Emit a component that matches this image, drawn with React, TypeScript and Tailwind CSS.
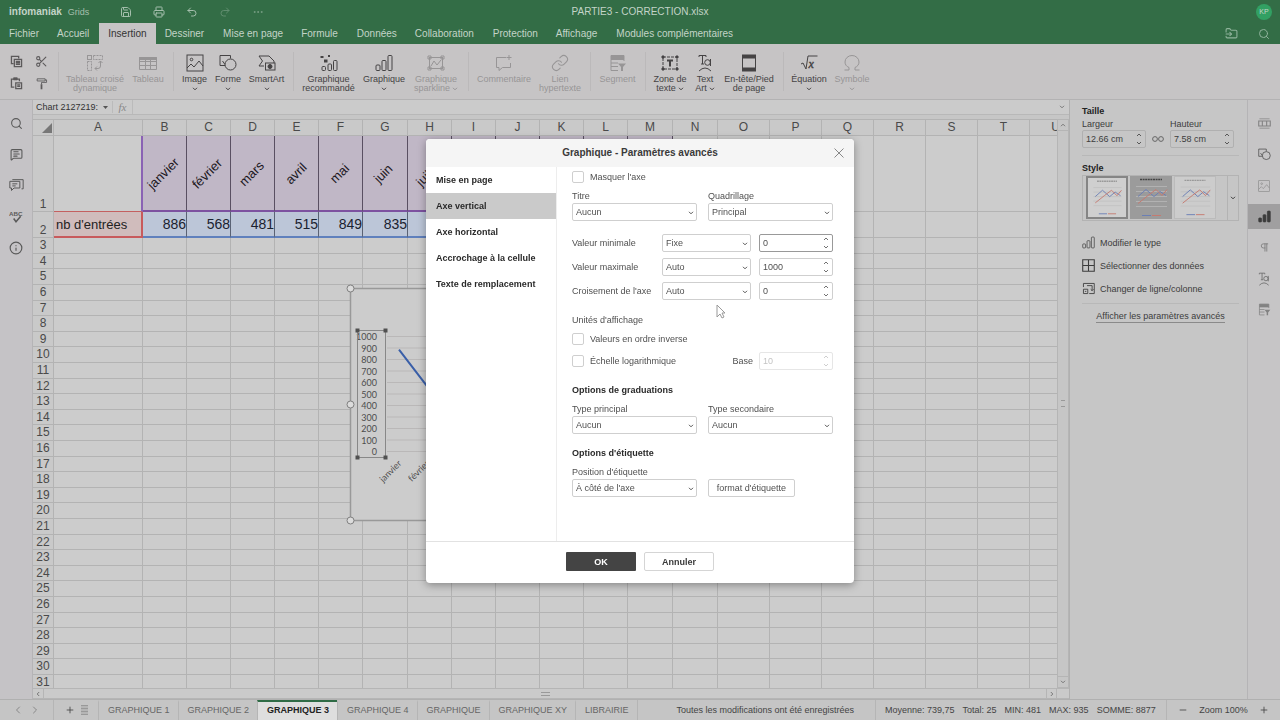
import React from "react";
import {
  Search,
  Save,
  Printer,
  Undo2,
  Redo2,
  Ellipsis,
  FolderInput,
  Scissors,
  Link,
  Info,
  MessageSquareText,
  ChevronLeft,
  ChevronRight,
  Plus,
  Minus,
  Pilcrow,
} from "lucide-react";

const menuTabs = [
  "Fichier",
  "Accueil",
  "Insertion",
  "Dessiner",
  "Mise en page",
  "Formule",
  "Données",
  "Collaboration",
  "Protection",
  "Affichage",
  "Modules complémentaires",
];

/* ---------- icons ---------- */

const Svg = ({ children, className = "w-[18px] h-[18px]", box = "0 0 18 18" }: { children: React.ReactNode; className?: string; box?: string }) => (
  <svg viewBox={box} className={className} fill="none" stroke="currentColor" strokeWidth="1" aria-hidden="true">
    {children}
  </svg>
);

const CopyIcon = () => (
  <Svg className="w-[13px] h-[13px]">
    <path d="M5 12H2V2h10v3" strokeWidth="1.800" />
    <path d="M6 6h10v10H6zM8 9h6M8 11h6M8 13h6" strokeWidth="1.800" />
  </Svg>
);
const PasteIcon = () => (
  <Svg className="w-[13px] h-[13px]">
    <path d="M6 14H2V3h11v3" strokeWidth="1.800" />
    <path d="M5 1h5v3H5z" fill="currentColor" />
    <path d="M8 8h8v8H8zM10 11h4M10 13h4" strokeWidth="1.800" />
  </Svg>
);
const BrushIcon = () => (
  <Svg className="w-[13px] h-[13px]">
    <path d="M3 2.500h11v3H3zM14 4h2v3.500H9V10" strokeWidth="1.200" />
    <path d="M9 10v7" strokeWidth="2.400" />
  </Svg>
);
const PivotIcon = () => (
  <Svg>
    <rect x="1.5" y="1.5" width="4" height="4" />
    <rect x="7.5" y="1.5" width="9" height="4" strokeDasharray="2 1" />
    <rect x="1.5" y="7.5" width="4" height="9" strokeDasharray="2 1" />
    <path d="M14.500 7v5q0 2.500-2.500 2.500H9M12.500 9l2-2 2 2M11 12.500l-2 2 2 2" />
  </Svg>
);
const TableIcon = () => (
  <Svg>
    <path d="M.5 3.500h17v12H.5zM.5 7.500h17M.5 11.500h17M6.500 3.500v12M11.500 3.500v12" />
    <path d="M.5 3.500h17v2H.5z" fill="currentColor" />
  </Svg>
);
const ImageIcon = ({ className }: { className?: string }) => (
  <Svg className={className}>
    <rect x="1" y="1" width="16" height="16" />
    <circle cx="5.500" cy="5.500" r="1.300" />
    <path d="M1 14l4-4 3 3 5-6 4 5" />
  </Svg>
);
const ShapesIcon = ({ className }: { className?: string }) => (
  <Svg className={className}>
    <path d="M6 11.500H1v-10h10.500v3" />
    <circle cx="11.500" cy="10.500" r="5.500" />
    <path d="M6 10.500L3.500 7" />
  </Svg>
);
const SmartArtIcon = () => (
  <Svg>
    <path d="M1 2h10l5 5M1 2l3.500 5L1 12h5M16 7v2" />
    <rect x="7.500" y="9" width="9.500" height="7" />
    <circle cx="12" cy="12.500" r="2" fill="currentColor" />
  </Svg>
);
const RecoIcon = () => (
  <Svg>
    <rect x="2" y="12.500" width="3.500" height="4" rx="1" />
    <rect x="8" y="10" width="3.500" height="6.500" rx="1" />
    <rect x="13.500" y="6.500" width="3.500" height="10" rx="1" />
    <path d="M.5 2h3v2h-3zM4 5.500h3.500v3H4zM8 1h2v2H8z" fill="currentColor" stroke="none" />
  </Svg>
);
const BarsIcon = ({ className, fill = "none" }: { className?: string; fill?: string }) => (
  <Svg className={className}>
    <rect x="1" y="11" width="4" height="5.500" rx="1" fill={fill} />
    <rect x="7" y="6.500" width="4" height="10" rx="1" fill={fill} />
    <rect x="13" y="1.500" width="4" height="15" rx="1" fill={fill} />
  </Svg>
);
const SparkIcon = () => (
  <Svg>
    <rect x="2.500" y="3.500" width="13" height="11" />
    <path d="M1 2h3v3H1zM14 2h3v3h-3zM1 13h3v3H1zM14 13h3v3h-3zM4 12l3-5 3 4 4-5" />
  </Svg>
);
const CommentIcon = () => (
  <Svg>
    <path d="M11 3.500H1.500v10H4v3l3.500-3h8V9M14 1v5M11.500 3.500h5" />
  </Svg>
);
const ChatsIcon = () => (
  <Svg className="w-[15px] h-[15px]">
    <path d="M1 4h12v8H6l-3 3v-3H1zM4 2h13v11h-2M4 7h6M4 9.500h4" strokeWidth="1.200" />
  </Svg>
);
const SlicerIcon = ({ className }: { className?: string }) => (
  <Svg className={className}>
    <path d="M2 1.500h13v4H2z" fill="currentColor" />
    <path d="M15 7V5.500M2 5.500v11h7M2 9h7M2 12.500h7" />
    <path d="M9 9.500h8l-3 3.500v4h-2v-4z" fill="currentColor" stroke="none" />
  </Svg>
);
const CellIcon = () => (
  <Svg className="w-[13px] h-[13px] opacity-70">
    <path d="M2 2.500h14M2 15.500h14" />
    <path d="M1 5.500h16v7H1zM6 5.500v7M12 5.500v7" strokeWidth="1.500" />
  </Svg>
);
const TextBoxIcon = () => (
  <Svg>
    <rect x="2" y="3" width="14" height="12" strokeDasharray="3 1" />
    <path d="M1 2h2v2H1zM15 2h2v2h-2zM1 14h2v2H1zM15 14h2v2h-2z" fill="currentColor" />
    <path d="M6 6.500h6M9 6.500v6" strokeWidth="2" />
  </Svg>
);
const TextArtIcon = ({ className }: { className?: string }) => (
  <Svg className={className}>
    <path d="M3 3V1.500h7V3M6.500 1.500V10M5 10h3" />
    <circle cx="11.500" cy="8.500" r="2.800" />
    <path d="M14.500 5v7M3 17q6-6 12 0" />
  </Svg>
);
const HeaderFooterIcon = () => (
  <Svg>
    <rect x="2.500" y="1" width="13" height="16" />
    <path d="M2 1h14v3.500H2zM2 13.500h14V17H2z" fill="currentColor" stroke="none" />
  </Svg>
);
const EquationIcon = () => (
  <Svg>
    <path d="M1 10l2-1 3 6 2-13h9.500" />
    <text x="8.500" y="14" fontSize="12" fontStyle="italic" fontFamily="Liberation Serif, serif" fill="currentColor" strokeWidth=".4">x</text>
  </Svg>
);
const OmegaIcon = () => (
  <Svg>
    <path d="M1.500 16H6v-2.500C3.500 12.500 2 10.500 2 8a7 6.500 0 0 1 14 0c0 2.500-1.500 4.500-4 5.500V16h4.500" />
  </Svg>
);
const SpellIcon = () => (
  <Svg className="w-[14px] h-[14px]">
    <text x="0" y="8" fontSize="8" fontWeight="bold" fontFamily="Liberation Sans, sans-serif" fill="currentColor" stroke="none">ABC</text>
    <path d="M6 11l3 4 6-7" strokeWidth="2" />
  </Svg>
);

const Caret = ({ className = "" }: { className?: string }) => (
  <Svg box="0 0 6 4" className={`w-[6px] h-[4px] ${className}`}>
    <path d="M1 .8l2 2 2-2" />
  </Svg>
);

/* ---------- ribbon ---------- */

type Tool = { lines: string[]; icon: React.ReactNode; width: string; off?: boolean; caret?: "below" | "inline" };

const groups: { pad: string; tools: Tool[] }[] = [
  {
    pad: "pr-[9px]",
    tools: [
      { lines: ["Tableau croisé", "dynamique"], icon: <PivotIcon />, width: "w-[74px]", off: true },
      { lines: ["Tableau"], icon: <TableIcon />, width: "w-[32px]", off: true },
    ],
  },
  {
    pad: "px-[5px]",
    tools: [
      { lines: ["Image"], icon: <ImageIcon />, width: "w-[33px]", caret: "below" },
      { lines: ["Forme"], icon: <ShapesIcon />, width: "w-[34px]", caret: "below" },
      { lines: ["SmartArt"], icon: <SmartArtIcon />, width: "w-[43px]", caret: "below" },
    ],
  },
  {
    pad: "px-[6px]",
    tools: [
      { lines: ["Graphique", "recommandé"], icon: <RecoIcon />, width: "w-[59px]" },
      { lines: ["Graphique"], icon: <BarsIcon />, width: "w-[52px]", caret: "below" },
      { lines: ["Graphique", "sparkline"], icon: <SparkIcon />, width: "w-[52px]", off: true, caret: "inline" },
    ],
  },
  {
    pad: "px-[5px]",
    tools: [
      { lines: ["Commentaire"], icon: <CommentIcon />, width: "w-[62px]", off: true },
      { lines: ["Lien", "hypertexte"], icon: <Link className="w-[18px] h-[18px]" strokeWidth={1.4} />, width: "w-[50px]", off: true },
    ],
  },
  { pad: "", tools: [{ lines: ["Segment"], icon: <SlicerIcon />, width: "w-[55px]", off: true }] },
  {
    pad: "px-[5px]",
    tools: [
      { lines: ["Zone de", "texte"], icon: <TextBoxIcon />, width: "w-[40px]", caret: "inline" },
      { lines: ["Text", "Art"], icon: <TextArtIcon />, width: "w-[30px]", caret: "inline" },
      { lines: ["En-tête/Pied", "de page"], icon: <HeaderFooterIcon />, width: "w-[58px]" },
    ],
  },
  {
    pad: "px-[5px]",
    tools: [
      { lines: ["Équation"], icon: <EquationIcon />, width: "w-[42px]", caret: "below" },
      { lines: ["Symbole"], icon: <OmegaIcon />, width: "w-[44px]", off: true, caret: "below" },
    ],
  },
];

const ToolButton = ({ tool }: { tool: Tool }) => (
  <button
    disabled={tool.off}
    className={`flex flex-col items-center shrink-0 whitespace-nowrap leading-[9px] ${tool.width} ${tool.off ? "text-[#979596]" : "text-[#454344]"}`}
  >
    {tool.icon}
    <span className="pt-[3px]">{tool.lines[0]}</span>
    {tool.lines[1] && (
      <span className="flex items-center gap-[2px]">
        {tool.lines[1]}
        {tool.caret === "inline" && <Caret />}
      </span>
    )}
    {tool.caret === "below" && <Caret className="mt-[3px]" />}
  </button>
);

const Ribbon = () => (
  <div className="flex h-14 shrink-0 bg-[#c6c4c5] border-b border-[#b3b2b3] overflow-hidden">
    <div className="grid grid-cols-2 w-[58px] shrink-0 px-[4px] pt-[6px] pb-[4px] place-items-center text-[#5c5a5b]">
      <button aria-label="Copier"><CopyIcon /></button>
      <button aria-label="Couper"><Scissors className="w-[13px] h-[13px]" strokeWidth={2} /></button>
      <button aria-label="Coller"><PasteIcon /></button>
      <button aria-label="Style"><BrushIcon /></button>
    </div>
    {groups.map((g, i) => (
      <div key={i} className={`flex shrink-0 items-start pt-[10px] relative ${g.pad}`}>
        <span className="absolute left-0 top-2 bottom-2 w-px bg-[#bbb9ba]" />
        {g.tools.map((t) => (
          <ToolButton key={t.lines.join(" ")} tool={t} />
        ))}
      </div>
    ))}
  </div>
);

/* ---------- sheet ---------- */

const columns = [
  { name: "A", width: "w-[89px]" },
  { name: "B", width: "w-[44px]" },
  { name: "C", width: "w-[44px]" },
  { name: "D", width: "w-[44px]" },
  { name: "E", width: "w-[44px]" },
  { name: "F", width: "w-[44px]" },
  { name: "G", width: "w-[45px]" },
  { name: "H", width: "w-[44px]" },
  { name: "I", width: "w-[44px]" },
  { name: "J", width: "w-[44px]" },
  { name: "K", width: "w-[44px]" },
  { name: "L", width: "w-[44px]" },
  { name: "M", width: "w-[45px]" },
  { name: "N", width: "w-[45px]" },
  { name: "O", width: "w-[52px]" },
  { name: "P", width: "w-[52px]" },
  { name: "Q", width: "w-[52px]" },
  { name: "R", width: "w-[52px]" },
  { name: "S", width: "w-[52px]" },
  { name: "T", width: "w-[52px]" },
  { name: "U", width: "w-[52px]" },
];

// twelve month columns, B to M
const months = ["janvier", "février", "mars", "avril", "mai", "juin", "juillet", "", "", "", "", ""];
const entries = ["886", "568", "481", "515", "849", "835", "", "", "", "", "", ""];
const emptyCols = columns.slice(13);

const lineCell = "border-r border-b border-[#b3b3b3] p-0";
const headCell = "border-r border-b border-[#b3b3b3] p-0 bg-[#c9c9c9] font-normal text-[#4a4a4a]";

const SheetTable = () => (
  <table className="table-fixed w-px border-separate border-spacing-0 text-[12px] leading-[13px]">
    <colgroup>
      <col className="w-[21px]" />
      {columns.map((c) => (
        <col key={c.name} className={c.width} />
      ))}
    </colgroup>
    <thead>
      <tr className="h-4">
        <th className={headCell}>
          <Svg box="0 0 10 10" className="w-[10px] h-[10px] ml-auto mr-[1px]">
            <path d="M10 0v10H0z" fill="#777" stroke="none" />
          </Svg>
        </th>
        {columns.map((c) => (
          <th key={c.name} className={headCell}>{c.name}</th>
        ))}
      </tr>
    </thead>
    <tbody>
      <tr className="h-[76px]">
        <th className={`${headCell} align-bottom`}>1</th>
        <td className="p-0 border-r-2 border-b border-r-[#8a62b4] border-b-[#c46060]" />
        {months.map((m, i) => (
          <td key={i} className="p-0 bg-[#c0b7c6] border-r border-b-2 border-r-[#5a5062] border-b-[#7d52a0]">
            <div className="flex justify-center items-center w-[41px] h-[70px] text-[13px] text-[#1c1822]">
              <span className="-rotate-45 whitespace-nowrap">{m}</span>
            </div>
          </td>
        ))}
        {emptyCols.map((c) => (
          <td key={c.name} className={lineCell} />
        ))}
      </tr>
      <tr className="h-[26px]">
        <th className={`${headCell} align-bottom`}>2</th>
        <td className="p-0 pl-[2px] bg-[#d0bcbc] border-r-2 border-b-2 border-[#c85a5c] text-[13px] text-[#222] whitespace-nowrap">nb d'entrées</td>
        {entries.map((n, i) => (
          <td key={i} className="p-0 bg-[#bcc6d8] border-r border-b-2 border-r-[#5a6274] border-b-[#5f80bd] text-[14px] text-[#1b2230] text-right">{n}</td>
        ))}
        {emptyCols.map((c) => (
          <td key={c.name} className={lineCell} />
        ))}
      </tr>
      {Array.from({ length: 29 }, (_, i) => (
        <tr key={i} className={i % 5 === 1 || i % 5 === 4 ? "h-[15px]" : "h-4"}>
          <th className={headCell}>{i + 3}</th>
          {columns.map((c) => (
            <td key={c.name} className={lineCell} />
          ))}
        </tr>
      ))}
    </tbody>
  </table>
);

const ticks = [1000, 900, 800, 700, 600, 500, 400, 300, 200, 100, 0];

const Chart = () => (
  <svg className="absolute left-[312px] top-[163px] w-[400px] h-[244px]" viewBox="0 0 400 244" fontFamily="Lato, sans-serif">
    <rect x="5.500" y="5.500" width="388" height="232" fill="#cccccc" stroke="#999" strokeWidth="1.500" />
    {ticks.map((t, i) => (
      <g key={t}>
        <path d={`M42 ${53.5 + i * 11.5}H380`} stroke="#bab8b8" />
        <text x="32" y={57 + i * 11.5} fontSize="9" textAnchor="end" fill="#4c4c4c">{t}</text>
      </g>
    ))}
    <polyline
      points={entries.slice(0, 6).map((n, i) => `${54 + i * 28},${168.5 - Number(n) * 0.115}`).join(" ")}
      fill="none"
      stroke="#3a5fa8"
      strokeWidth="2"
    />
    <rect x="12.500" y="47.500" width="28" height="127" fill="none" stroke="#888" />
    {[[12.5, 47.5], [40.5, 47.5], [12.5, 174.5], [40.5, 174.5]].map(([x, y]) => (
      <rect key={`${x}-${y}`} x={x - 2} y={y - 2} width="4" height="4" fill="#505050" />
    ))}
    {months.slice(0, 2).map((m, i) => (
      <text key={m} x={57 + i * 28} y="181" fontSize="9" textAnchor="end" fill="#4c4c4c" transform={`rotate(-45 ${57 + i * 28} 181)`}>{m}</text>
    ))}
    {[5.5, 121.5, 237.5].map((y) => (
      <g key={y} fill="#dcdcdc" stroke="#808080">
        <circle cx="5.500" cy={y} r="3.500" />
        <circle cx="393.500" cy={y} r="3.500" />
      </g>
    ))}
  </svg>
);

const Sheet = () => (
  <div className="flex flex-col flex-1 min-w-0 bg-[#c6c6c6]">
    <div className="flex items-center h-[15px] shrink-0 bg-[#cbcbcb] border-b border-[#b8b8b8]">
      <input aria-label="Zone de nom" defaultValue="Chart 2127219:" className="w-[66px] pl-[3px] text-[#333]" />
      <svg viewBox="0 0 5 3" className="w-[5px] h-[3px] ml-1" aria-hidden="true"><path d="M0 0h5L2.500 3z" fill="#555" /></svg>
      <i className="w-5 ml-1 text-center font-['Liberation_Serif',serif] text-[11px] text-[#888] border-l border-[#bbb]">fx</i>
      <input aria-label="Barre de formule" className="flex-1 h-full border-l border-[#bbb]" />
      <Caret className="mr-1 text-[#777]" />
    </div>
    <div className="flex flex-1 min-h-0 mt-1">
      <div className="relative flex-1 min-w-0 overflow-hidden bg-[#cccccc] border-t border-[#b3b3b3]">
        <SheetTable />
        <Chart />
      </div>
      <div className="w-3 shrink-0 flex flex-col justify-between items-center bg-[#c6c6c6] border-x border-[#b5b5b5] text-[#777]">
        <span className="w-full h-3 flex items-center justify-center border-y border-[#b5b5b5]"><Caret className="rotate-180" /></span>
        <span className="w-[4px] h-[7px] border-y border-[#999]" />
        <span className="w-full h-3 flex items-center justify-center border-y border-[#b5b5b5]"><Caret /></span>
      </div>
    </div>
    <div className="h-[11px] shrink-0 flex items-center justify-between bg-[#cacaca] border-y border-[#b5b5b5] text-[#777] pr-3">
      <span className="w-[11px] h-full flex items-center justify-center border-r border-[#b5b5b5]"><Caret className="rotate-90" /></span>
      <span className="w-[9px] h-[4px] border-y border-[#999]" />
      <span className="w-[11px] h-full flex items-center justify-center border-x border-[#b5b5b5]"><Caret className="-rotate-90" /></span>
    </div>
  </div>
);

/* ---------- side bars ---------- */

const LeftRail = () => (
  <nav className="w-[33px] shrink-0 flex flex-col items-center bg-[#c5c3c6] border-r border-[#b5b4b6] pt-2 text-[#5a5a5a]">
    {[
      { label: "Rechercher", icon: <Search className="w-[13px] h-[13px]" /> },
      { label: "Commentaires", icon: <MessageSquareText className="w-[13px] h-[13px]" /> },
      { label: "Chat", icon: <ChatsIcon /> },
      { label: "Orthographe", icon: <SpellIcon /> },
      { label: "À propos", icon: <Info className="w-[14px] h-[14px]" /> },
    ].map((item) => (
      <button key={item.label} aria-label={item.label} className="h-[31px] w-full flex items-center justify-center">{item.icon}</button>
    ))}
  </nav>
);

const RightRail = () => (
  <nav className="w-[33px] shrink-0 flex flex-col items-center bg-[#c6c5c6] border-l border-[#b5b4b6] pt-2 text-[#666]">
    {[
      { label: "Cellule", icon: <CellIcon /> },
      { label: "Forme", icon: <ShapesIcon className="w-[13px] h-[13px] text-[#444]" /> },
      { label: "Image", icon: <ImageIcon className="w-[12px] h-[12px] opacity-60" /> },
      { label: "Graphique", icon: <BarsIcon className="w-[13px] h-[13px] text-[#3c3c3c]" fill="currentColor" />, on: true },
      { label: "Paragraphe", icon: <Pilcrow className="w-[11px] h-[11px] opacity-70" /> },
      { label: "Text Art", icon: <TextArtIcon className="w-[14px] h-[14px]" /> },
      { label: "Segment", icon: <SlicerIcon className="w-[13px] h-[13px] opacity-70" /> },
    ].map((item) => (
      <button key={item.label} aria-label={item.label} className={`h-[31px] w-full flex items-center justify-center ${item.on ? "bg-[#a09fa0] bg-clip-content py-[3px]" : ""}`}>{item.icon}</button>
    ))}
  </nav>
);

const Spinner = () => (
  <svg viewBox="0 0 6 12" className="absolute right-1 top-[3px] w-[6px] h-[12px] opacity-80" fill="none" stroke="currentColor" aria-hidden="true">
    <path d="M1 3l2-2 2 2M1 9l2 2 2-2" />
  </svg>
);

const SizeField = ({ label, value }: { label: string; value: string }) => (
  <label className="block w-[64px]">
    <span className="block leading-[12px]">{label}</span>
    <span className="relative block">
      <input defaultValue={value} className="w-full h-[18px] border border-[#b0b0b0] rounded-[2px] pl-[3px]" />
      <Spinner />
    </span>
  </label>
);

const thumbs = [
  { box: "w-[42px] border-2 border-[#858585] bg-[#cfcfcf]", title: "#999" },
  { box: "w-[42px] bg-[#9b9b9b]", title: "#444" },
  { box: "w-[42px] border border-[#bbb] bg-[#cccccc]", title: "#999" },
];

const RightPanel = () => (
  <aside className="w-[178px] shrink-0 bg-[#c6c6c6] border-l border-[#b0b0b0] pl-3 pr-2 pt-[5px] text-[#3c3c3c]">
    <h3 className="font-bold leading-[12px] text-[#222]">Taille</h3>
    <div className="flex items-end gap-[6px] pt-px">
      <SizeField label="Largeur" value="12.66 cm" />
      <svg viewBox="0 0 12 6" className="w-[12px] h-[6px] mb-[6px]" fill="none" stroke="#666" aria-hidden="true">
        <circle cx="3" cy="3" r="2.400" />
        <circle cx="9" cy="3" r="2.400" />
      </svg>
      <SizeField label="Hauteur" value="7.58 cm" />
    </div>
    <hr className="mt-[7px] border-[#b8b8b8]" />
    <h3 className="font-bold leading-[12px] mt-[6px] text-[#222]">Style</h3>
    <div className="flex h-[46px] mt-px w-full border border-[#b3b3b3] items-start pl-[3px] gap-[2px]">
      {thumbs.map((t, i) => (
        <svg key={i} viewBox="0 0 42 42" className={`h-[43px] shrink-0 ${t.box}`} fill="none" aria-hidden="true">
          <path d="M10 3h22" stroke={t.title} strokeWidth="1.500" strokeDasharray="2 .6" />
          <path d="M6 10h31M6 15h31M6 20h31M6 25h31M6 30h31" stroke="#bcbcbc" strokeWidth=".7" />
          <path d="M8 20l8-7 8 7 6-5 6 4" stroke="#6b7fb5" />
          <path d="M8 27l10-8 8-6 6 6 5-6" stroke="#c57a70" />
          <path d="M12 39h9" stroke="#6b7fb5" />
          <path d="M22 39h9" stroke="#c57a70" />
        </svg>
      ))}
      <button aria-label="Plus de styles" className="ml-auto h-full w-[11px] shrink-0 flex items-center justify-center border-l border-[#b3b3b3]"><Caret /></button>
    </div>
    <div className="flex flex-col pt-[10px]">
      {[
        { text: "Modifier le type", icon: <BarsIcon className="w-[13px] h-[13px]" /> },
        { text: "Sélectionner des données", icon: <Svg className="w-[13px] h-[13px]"><path d="M1 1h16v16H1zM9 1v16M1 9h16" strokeWidth="1.500" /></Svg> },
        { text: "Changer de ligne/colonne", icon: <Svg className="w-[13px] h-[13px]"><path d="M2 7V2h15v14h-7M7 5h7M14 5v7M12 10l2 2 2-2M2 10h6v6H2zM4 13h2" strokeWidth="1.200" /></Svg> },
      ].map((row) => (
        <button key={row.text} className="flex items-center gap-[5px] h-[23px] whitespace-nowrap">
          {row.icon}
          {row.text}
        </button>
      ))}
    </div>
    <hr className="mt-[3px] border-[#b8b8b8]" />
    <div className="text-center pt-[6px]">
      <a href="#avances" className="inline-block leading-[12px] border-b border-[#8a8a8a] whitespace-nowrap">Afficher les paramètres avancés</a>
    </div>
  </aside>
);

/* ---------- status bar ---------- */

const sheets = ["GRAPHIQUE 1", "GRAPHIQUE 2", "GRAPHIQUE 3", "GRAPHIQUE 4", "GRAPHIQUE", "GRAPHIQUE XY", "LIBRAIRIE"];

const StatusBar = () => (
  <footer className="flex items-stretch h-[21px] shrink-0 bg-[#c5c5c5] border-t border-[#b0b0b0] text-[#444] whitespace-nowrap">
    <div className="flex items-center justify-center gap-[5px] w-[53px] text-[#888]">
      <ChevronLeft className="w-3 h-3" />
      <ChevronRight className="w-3 h-3" />
    </div>
    <div className="flex items-center justify-center gap-[6px] w-[45px] border-l border-[#b5b5b5]">
      <Plus className="w-[10px] h-[10px]" />
      <span className="w-[7px] h-[10px] bg-[repeating-linear-gradient(#999_0_1px,#b5b5b5_1px_3px)]" />
    </div>
    {sheets.map((s, i) => (
      <button
        key={s}
        className={`border-l border-[#b5b5b5] border-t-2 pl-[9px] pr-2 pb-[2px] ${i === 2 ? "bg-[#dedede] border-t-[#2f6b45] font-bold text-[#222]" : "border-t-transparent text-[#666]"}`}
      >
        {s}
      </button>
    ))}
    <div className="flex-1 flex items-center justify-center border-l border-[#b5b5b5] pl-[18px]">Toutes les modifications ont été enregistrées</div>
    <div className="flex items-center gap-2 w-[291px] pl-[9px] border-l border-[#b5b5b5]">
      <span>Moyenne: 739,75</span>
      <span>Total: 25</span>
      <span>MIN: 481</span>
      <span>MAX: 935</span>
      <span>SOMME: 8877</span>
    </div>
    <div className="flex items-center justify-between w-[114px] px-[11px] border-l border-[#b5b5b5]">
      <button aria-label="Réduire"><Minus className="w-[10px] h-[10px]" /></button>
      <span>Zoom 100%</span>
      <button aria-label="Agrandir"><Plus className="w-[10px] h-[10px]" /></button>
    </div>
  </footer>
);

/* ---------- dialog ---------- */

const Select = ({ id, label, value, width = "w-full" }: { id: string; label?: string; value: string; width?: string }) => (
  <span className={`relative block shrink-0 ${width}`}>
    <select id={id} aria-label={label} className="block w-full h-[18px] appearance-none border border-[#cfcfcf] rounded-[2px] bg-white pl-[3px] text-[#505050]">
      <option>{value}</option>
    </select>
    <Caret className="absolute right-[3px] top-[8px] text-[#555] pointer-events-none" />
  </span>
);

const LabeledSelect = ({ id, label, value }: { id: string; label: string; value: string }) => (
  <div className="w-[125px]">
    <label htmlFor={id} className="block leading-[12px] pb-px">{label}</label>
    <Select id={id} value={value} />
  </div>
);

const NumberField = ({ id, value, active, off }: { id: string; value: string; active?: boolean; off?: boolean }) => (
  <span className={`relative block w-[74px] ml-auto ${off ? "text-[#c4c4c4]" : "text-[#505050]"}`}>
    <input
      id={id}
      defaultValue={value}
      disabled={off}
      className={`block w-full h-[18px] border rounded-[2px] pl-[3px] ${active ? "border-[#999]" : off ? "border-[#e6e6e6]" : "border-[#cfcfcf]"}`}
    />
    <Spinner />
  </span>
);

const Check = ({ label }: { label: string }) => (
  <label className="flex items-center gap-[6px]">
    <input type="checkbox" className="appearance-none w-3 h-3 border border-[#cfcfcf] rounded-[2px] bg-white" />
    {label}
  </label>
);

const dialogTabs = ["Mise en page", "Axe vertical", "Axe horizontal", "Accrochage à la cellule", "Texte de remplacement"];

const axisRows = [
  { id: "minimum", label: "Valeur minimale", mode: "Fixe", value: "0", active: true },
  { id: "maximum", label: "Valeur maximale", mode: "Auto", value: "1000" },
  { id: "crossing", label: "Croisement de l'axe", mode: "Auto", value: "0" },
];

const Dialog = () => (
  <div className="fixed inset-0 flex items-center justify-center pt-[2px]">
    <div role="dialog" aria-labelledby="dialog-title" className="relative flex flex-col w-[428px] bg-white rounded-[4px] shadow-[0_2px_8px_rgba(0,0,0,0.35)] overflow-hidden text-[#505050]">
      <header className="relative flex items-center justify-center h-7 bg-[#f5f5f5]">
        <h2 id="dialog-title" className="text-[10px] font-bold text-[#3a3a3a]">Graphique - Paramètres avancés</h2>
        <button aria-label="Fermer" className="absolute right-[10px] top-[9px] text-[#888]">
          <Svg box="0 0 10 10" className="w-[10px] h-[10px]"><path d="M.5.5l9 9M9.500.5l-9 9" /></Svg>
        </button>
      </header>
      <div className="flex">
        <ul className="w-[130px] shrink-0">
          {dialogTabs.map((t, i) => (
            <li key={t}>
              <button className={`w-full h-[26px] pl-[10px] text-left font-bold text-[#2a2a2a] whitespace-nowrap ${i === 1 ? "bg-[#cacaca]" : ""}`}>{t}</button>
            </li>
          ))}
        </ul>
        <div className="flex-1 h-[374px] border-l border-[#ededed] pl-[15px] pr-[21px] pt-1">
          <Check label="Masquer l'axe" />
          <div className="flex justify-between pt-[7px]">
            <LabeledSelect id="title" label="Titre" value="Aucun" />
            <LabeledSelect id="grid" label="Quadrillage" value="Principal" />
          </div>
          <div className="flex flex-col gap-[6px] pt-[13px]">
            {axisRows.map((r) => (
              <div key={r.id} className="flex items-center">
                <label htmlFor={r.id} className="w-[90px] whitespace-nowrap">{r.label}</label>
                <Select id={`${r.id}-mode`} label={r.label} value={r.mode} width="w-[89px]" />
                <NumberField id={r.id} value={r.value} active={r.active} />
              </div>
            ))}
          </div>
          <p className="leading-[12px] pt-[14px]">Unités d'affichage</p>
          <div className="pt-[7px]">
            <Check label="Valeurs en ordre inverse" />
          </div>
          <div className="flex items-center pt-[7px]">
            <Check label="Échelle logarithmique" />
            <label htmlFor="base" className="ml-auto pr-[6px]">Base</label>
            <span className="w-[74px]"><NumberField id="base" value="10" off /></span>
          </div>
          <h3 className="font-bold leading-[12px] pt-[14px] text-[#2a2a2a]">Options de graduations</h3>
          <div className="flex justify-between pt-[7px]">
            <LabeledSelect id="major" label="Type principal" value="Aucun" />
            <LabeledSelect id="minor" label="Type secondaire" value="Aucun" />
          </div>
          <h3 className="font-bold leading-[12px] pt-[13px] text-[#2a2a2a]">Options d'étiquette</h3>
          <div className="flex items-end gap-[11px] pt-[7px]">
            <LabeledSelect id="labels" label="Position d'étiquette" value="À côté de l'axe" />
            <button className="w-[87px] h-[18px] border border-[#cfcfcf] rounded-[2px]">format d'étiquette</button>
          </div>
        </div>
      </div>
      <footer className="flex justify-center gap-2 h-[42px] pt-[10px] border-t border-[#e2e2e2] font-bold">
        <button className="w-[70px] h-[19px] bg-[#444] text-white rounded-[1px]">OK</button>
        <button className="w-[70px] h-[19px] border border-[#d5d5d5] rounded-[2px] text-[#3a3a3a]">Annuler</button>
      </footer>
      {/* mouse pointer */}
      <svg viewBox="0 0 10 16" className="absolute left-[290px] top-[165px] w-[10px] h-[16px]" aria-hidden="true">
        <path d="M1 1v12l3-3 2 4 2-1-2-4h3z" fill="#fff" stroke="#999" />
      </svg>
    </div>
  </div>
);

const TopBar = () => (
  <header className="shrink-0 bg-[#336d46] text-[#c3d4c8]">
    <div className="relative flex items-center h-[23px] px-2">
      <span className="pl-px text-[10px] font-bold">infomaniak</span>
      <span className="pl-[6px] text-[#a5bfad]">Grids</span>
      <div className="flex gap-[21px] pl-[31px] text-[#a5bfad]">
        <Save className="w-3 h-3" />
        <Printer className="w-3 h-3" />
        <Undo2 className="w-3 h-3" />
        <Redo2 className="w-3 h-3 opacity-40" />
        <Ellipsis className="w-3 h-3 opacity-60" />
      </div>
      <h1 className="absolute inset-x-0 text-center text-[10px] pointer-events-none">PARTIE3 - CORRECTION.xlsx</h1>
      <span className="ml-auto w-4 h-4 rounded-full bg-[#32a063] text-[7px] flex items-center justify-center">KP</span>
    </div>
    <div className="flex items-stretch h-[21px] text-[10px] whitespace-nowrap">
      {menuTabs.map((t) => (
        <button key={t} className={`px-[9px] even:pr-[10px] ${t === "Insertion" ? "bg-[#c6c4c5] text-[#333]" : ""}`}>{t}</button>
      ))}
      <div className="ml-auto flex items-center gap-5 pr-[10px] text-[#8fb39b]">
        <FolderInput className="w-[13px] h-[13px]" />
        <Search className="w-3 h-3" />
      </div>
    </div>
  </header>
);

const App = () => {
  return (
    <div className="flex flex-col h-screen overflow-hidden bg-[#c6c6c6] font-['Liberation_Sans',Arial,sans-serif] text-[9px] leading-[12px]">
      <TopBar />
      <Ribbon />
      <main className="flex flex-1 min-h-0">
        <LeftRail />
        <Sheet />
        <RightPanel />
        <RightRail />
      </main>
      <StatusBar />
      <Dialog />
    </div>
  );
};

export default App;
